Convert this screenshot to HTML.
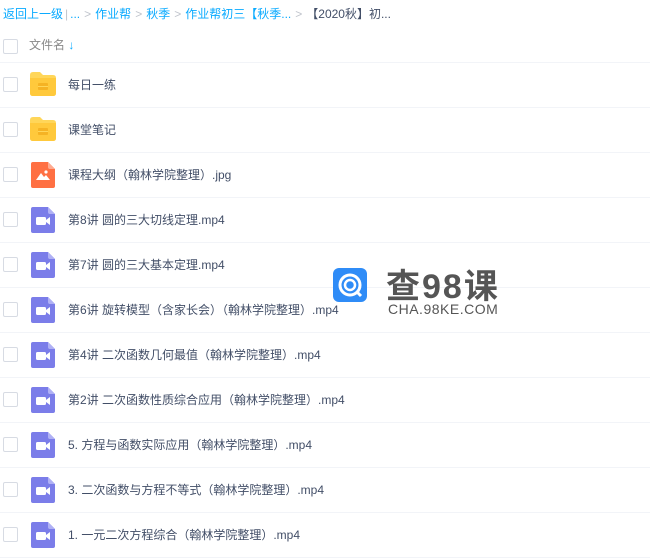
<!DOCTYPE html>
<html><head><meta charset="utf-8"><style>
body{margin:0;width:650px;height:553px;background:#fff;font-family:"Liberation Sans","Noto Sans CJK SC",sans-serif;overflow:hidden;position:relative;color:#424e67}
.bc{position:absolute;top:5px;left:3px;font-size:12px;color:#09aaff;white-space:nowrap}
.bc .g{color:#c0c4cc;margin:0 4px}
.bc .d{color:#424e67}
.hdr{position:absolute;top:33px;left:0;width:650px;height:29px;border-bottom:1px solid #f2f4f8}
.cb{position:absolute;left:3px;width:13px;height:13px;border:1px solid #d7dbe3;border-radius:2px;background:#fff}
.hdr .t{position:absolute;left:29px;top:3px;font-size:12px;color:#888}
.row{position:absolute;left:0;width:650px;height:45px;border-bottom:1px solid #f2f4f8}
.row .cb{top:15px}
.row .ic{position:absolute;left:30px;top:10px}
.row .n{position:absolute;left:68px;top:14px;font-size:12px;color:#424e67;white-space:nowrap}
</style></head><body>
<div class="bc">返回上一级<span class="g" style="margin:0 2px">|</span><span style="color:#09aaff">...</span><span class="g">&gt;</span>作业帮<span class="g">&gt;</span>秋季<span class="g">&gt;</span>作业帮初三【秋季...<span class="g">&gt;</span><span class="d">【2020秋】初...</span></div>
<div class="hdr"><div class="cb" style="top:6px"></div><div class="t">文件名 <span style="color:#09aaff;font-weight:bold">↓</span></div></div>

<div id="rows"></div>
<script>
var items=[["f","每日一练"],["f","课堂笔记"],["i","课程大纲（翰林学院整理）.jpg"],["v","第8讲 圆的三大切线定理.mp4"],["v","第7讲 圆的三大基本定理.mp4"],["v","第6讲 旋转模型（含家长会）（翰林学院整理）.mp4"],["v","第4讲 二次函数几何最值（翰林学院整理）.mp4"],["v","第2讲 二次函数性质综合应用（翰林学院整理）.mp4"],["v","5. 方程与函数实际应用（翰林学院整理）.mp4"],["v","3. 二次函数与方程不等式（翰林学院整理）.mp4"],["v","1. 一元二次方程综合（翰林学院整理）.mp4"]];
var icons={
f:'<svg width="26" height="24"><path d="M0 3q0-3 3-3h7l3 3h10q3 0 3 3v15q0 3-3 3H3q-3 0-3-3z" fill="#ffd659"/><path d="M0 6h26v15q0 3-3 3H3q-3 0-3-3z" fill="#ffc93c"/><rect x="8" y="11" width="10" height="7" rx="1" fill="#f5b324"/><rect x="8" y="14" width="10" height="1" fill="#ffd659"/></svg>',
i:'<svg width="24" height="26" style="margin-left:1px"><path d="M2 0h15l7 7v17q0 2-2 2H2q-2 0-2-2V2q0-2 2-2z" fill="#ff7043"/><path d="M17 0v5q0 2 2 2h5z" fill="#ffab91"/><path d="M5 18l5-7 3 4 2-2 4 5z" fill="#fff"/><circle cx="15" cy="10" r="1.6" fill="#fff"/></svg>',
v:'<svg width="24" height="26" style="margin-left:1px"><path d="M2 0h15l7 7v17q0 2-2 2H2q-2 0-2-2V2q0-2 2-2z" fill="#7b7de9"/><path d="M17 0v5q0 2 2 2h5z" fill="#b0b1f5"/><rect x="5" y="10" width="10" height="8" rx="1.5" fill="#fff"/><path d="M15 13l4-3v8l-4-3z" fill="#fff"/></svg>'};
var h='';
items.forEach(function(it,k){var top=62+k*45;h+='<div class="row" style="top:'+top+'px"><div class="cb"></div><div class="ic">'+icons[it[0]]+'</div><div class="n">'+it[1]+'</div></div>';});
document.getElementById('rows').innerHTML=h;
</script>
<svg style="position:absolute;left:333px;top:268px" width="34" height="34"><rect width="34" height="34" rx="6" fill="#2f8cf7"/><circle cx="17" cy="17" r="10" fill="none" stroke="#fff" stroke-width="3"/><circle cx="17" cy="17" r="5" fill="none" stroke="#fff" stroke-width="2.5"/><path d="M24 24l4 4" stroke="#fff" stroke-width="3"/></svg>
<div style="position:absolute;left:386px;top:259px;font-size:34px;color:#555;font-weight:bold;letter-spacing:2px;font-family:'Liberation Sans','Noto Sans CJK SC',sans-serif">查98课</div>
<div style="position:absolute;left:388px;top:301px;font-size:14px;color:#555;letter-spacing:0.5px">CHA.98KE.COM</div>
</body></html>
